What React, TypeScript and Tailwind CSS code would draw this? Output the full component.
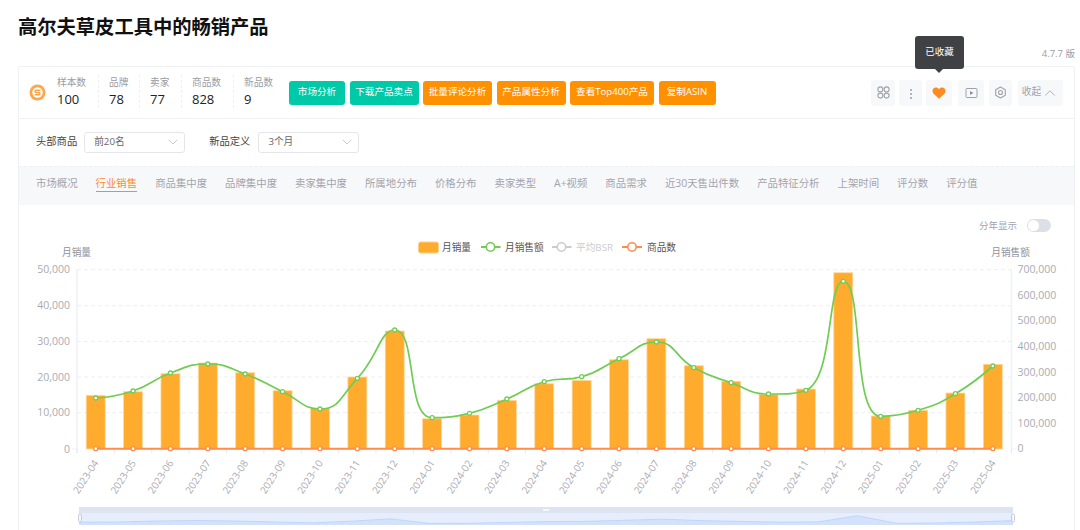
import React from "react";
import { ChevronDown, ChevronUp } from "lucide-react";

const FONT = '"Open Sans","Noto Sans CJK SC",sans-serif';
const months = ["2023-04","2023-05","2023-06","2023-07","2023-08","2023-09","2023-10","2023-11","2023-12","2024-01","2024-02","2024-03","2024-04","2024-05","2024-06","2024-07","2024-08","2024-09","2024-10","2024-11","2024-12","2025-01","2025-02","2025-03","2025-04"];
const barTop = [395.3,391.7,373.7,363,372.7,390.7,408.3,377,331,418.7,415,400.3,383.7,380.3,359.7,338.7,365.7,381.3,394.3,389,272.7,416,410.3,393,364.3];
const lineY = [398,391,373,364,374,391.7,409,378.3,330,417.7,413.3,399,381.7,376.7,358.7,342,367.7,382.7,394,390.3,281.3,416.3,410.3,393.7,366];

// Chart coordinates are page coordinates shifted by the svg's origin.
const OX = 19;
const OY = 238;
const L = 77;
const R = 1011.5;
const BASE = 449;
const band = (R - L) / 25;
const cx = (i: number) => L + band * (i + 0.5);

// Same control-point rule as the chart library's smoothed line: never overshoots a neighbour.
function smooth(px: number[], py: number[], s = 0.5) {
  const n = px.length;
  let d = `M${px[0]} ${py[0]}`;
  let c0x = px[0];
  let c0y = py[0];
  for (let i = 0; i < n - 1; i++) {
    const x = px[i + 1];
    const y = py[i + 1];
    let c1x = x;
    let c1y = y;
    let nextX0 = x;
    let nextY0 = y;
    if (i + 2 < n) {
      const pvx = px[i];
      const pvy = py[i];
      const nx = px[i + 2];
      const ny = py[i + 2];
      const vx = nx - pvx;
      const vy = ny - pvy;
      const lp = Math.hypot(x - pvx, y - pvy);
      const ln = Math.hypot(nx - x, ny - y);
      const r = ln / (ln + lp);
      let ncx = x + vx * s * r;
      let ncy = y + vy * s * r;
      ncx = Math.max(Math.min(ncx, Math.max(nx, x)), Math.min(nx, x));
      ncy = Math.max(Math.min(ncy, Math.max(ny, y)), Math.min(ny, y));
      let wx = ncx - x;
      let wy = ncy - y;
      c1x = x - (wx * lp) / ln;
      c1y = y - (wy * lp) / ln;
      c1x = Math.max(Math.min(c1x, Math.max(pvx, x)), Math.min(pvx, x));
      c1y = Math.max(Math.min(c1y, Math.max(pvy, y)), Math.min(pvy, y));
      wx = x - c1x;
      wy = y - c1y;
      nextX0 = x + (wx * ln) / lp;
      nextY0 = y + (wy * ln) / lp;
    }
    d += `C${c0x} ${c0y} ${c1x} ${c1y} ${x} ${y}`;
    c0x = nextX0;
    c0y = nextY0;
  }
  return d;
}

const xs = months.map((_, i) => cx(i));
const linePath = smooth(xs, lineY);

const stats = [
  ["样本数", "100", "w-[42px]"],
  ["品牌", "78", "w-[41px]"],
  ["卖家", "77", "w-[42px]"],
  ["商品数", "828", "w-[52px]"],
  ["新品数", "9", "w-[55px]"],
];
const buttons: [string, string, string][] = [
  ["市场分析", "bg-[#00c9a7]", "w-[56px]"],
  ["下载产品卖点", "bg-[#00c9a7]", "w-[69px]"],
  ["批量评论分析", "bg-[#ff9000]", "w-[69px]"],
  ["产品属性分析", "bg-[#ff9000]", "w-[69px]"],
  ["查看Top400产品", "bg-[#ff9000]", "w-[84px]"],
  ["复制ASIN", "bg-[#ff9000]", "w-[57px]"],
];
const tabs = ["市场概况","行业销售","商品集中度","品牌集中度","卖家集中度","所属地分布","价格分布","卖家类型","A+视频","商品需求","近30天售出件数","产品特征分析","上架时间","评分数","评分值"];

function Chart() {
  const gridYs = [269.7, 305.7, 341.4, 377, 412.7, 449];
  const leftLabels = ["50,000", "40,000", "30,000", "20,000", "10,000", "0"];
  const rightLabels = ["700,000", "600,000", "500,000", "400,000", "300,000", "200,000", "100,000", "0"];
  const axisText = "#a9abb3";
  const sx = (v: number) => 79 + (v / 24) * 934;
  const miniPts = barTop.map((t, i) => [sx(i), 525 - ((449 - t) / 180) * 9.5]);
  const mini = "M" + miniPts.map((p) => `${p[0]} ${p[1]}`).join("L");
  return (
    <svg width={1056} height={292} viewBox={`${OX} ${OY} 1056 292`} className="block" fontFamily={FONT}>
      {/* legend */}
      <rect x={418.5} y={242} width={20} height={11} rx={2} fill="#ffac2e" stroke="#ffd08a" strokeWidth={1} />
      <text x={442} y={251} fontSize={9.7} fill="#555">月销量</text>
      <line x1={481} x2={500.5} y1={247} y2={247} stroke="#71cc54" strokeWidth={2} />
      <circle cx={490.5} cy={247} r={4.2} fill="#fff" stroke="#71cc54" strokeWidth={1.6} />
      <text x={505} y={251} fontSize={9.7} fill="#555">月销售额</text>
      <line x1={552} x2={571.5} y1={247} y2={247} stroke="#ccc" strokeWidth={2} />
      <circle cx={561.5} cy={247} r={4.2} fill="#fff" stroke="#ccc" strokeWidth={1.6} />
      <text x={576} y={251} fontSize={9.7} fill="#ccc">平均BSR</text>
      <line x1={622} x2={642} y1={247} y2={247} stroke="#ff8c4b" strokeWidth={2} />
      <circle cx={632} cy={247} r={4.2} fill="#fff" stroke="#ff8c4b" strokeWidth={1.6} />
      <text x={647} y={251} fontSize={9.7} fill="#555">商品数</text>

      <text x={62} y={256} fontSize={9.7} fill="#8f9199">月销量</text>
      <text x={1030} y={256} fontSize={9.7} fill="#8f9199" textAnchor="end">月销售额</text>

      {/* grid */}
      {gridYs.slice(0, 5).map((y) => (
        <line key={y} x1={L} x2={R} y1={y} y2={y} stroke="#eceef2" strokeDasharray="4 3" />
      ))}
      <line x1={L} x2={L} y1={269} y2={453} stroke="#eff1f5" strokeWidth={1.5} />
      <line x1={R} x2={R} y1={269} y2={453} stroke="#eff1f5" strokeWidth={1.5} />
      <line x1={72} x2={L} y1={449} y2={449} stroke="#eff1f5" />
      <line x1={R} x2={1016} y1={449} y2={449} stroke="#eff1f5" />
      {gridYs.map((y, i) => (
        <text key={i} x={70} y={y + 3.5} fontSize={10.5} fill={axisText} textAnchor="end">{leftLabels[i]}</text>
      ))}
      {rightLabels.map((t, i) => (
        <text key={t} x={1017.5} y={269.7 + i * 25.6 + 3.5} fontSize={10.5} fill={axisText}>{t}</text>
      ))}

      {/* x ticks and labels */}
      {Array.from({ length: 26 }).map((_, i) => (
        <line key={i} x1={L + band * i} x2={L + band * i} y1={449} y2={453} stroke="#e6e8ee" />
      ))}
      {months.map((m, i) => (
        <text key={m} x={cx(i) + 3.3} y={463} fontSize={10} fill={axisText} textAnchor="end" transform={`rotate(-57 ${cx(i) + 3.3} 463)`}>{m}</text>
      ))}

      {/* bars */}
      {barTop.map((t, i) => (
        <rect key={i} x={cx(i) - 9.5} y={t} width={19} height={BASE - t} fill="#ffac2e" stroke="#ffd9a0" strokeWidth={0.8} />
      ))}

      {/* lines */}
      <line x1={cx(0)} x2={cx(24)} y1={448.7} y2={448.7} stroke="#ff8c4b" strokeWidth={2} />
      <path d={linePath} fill="none" stroke="#71cc54" strokeWidth={1.7} />
      {xs.map((x, i) => (
        <circle key={i} cx={x} cy={lineY[i]} r={2} fill="#fff" stroke="#71cc54" strokeWidth={1.3} />
      ))}
      {xs.map((x, i) => (
        <circle key={i} cx={x} cy={448.7} r={2} fill="#fff" stroke="#ff8c4b" strokeWidth={1.3} />
      ))}

      {/* data zoom */}
      <rect x={79} y={507} width={934} height={18} fill="#e6eefd" />
      <rect x={79} y={507} width={934} height={6} fill="#dde3f1" />
      <path d={`${mini}L1013 525L79 525Z`} fill="#d3e1fb" />
      <path d={mini} fill="none" stroke="#bcd0f5" strokeWidth={0.8} />
      <rect x={543} y={509} width={6} height={2} fill="#f5f7fb" />
      <rect x={78.5} y={514} width={3} height={8} rx={1.5} fill="#f4f7fe" stroke="#b7c2da" strokeWidth={0.8} />
      <rect x={1011.5} y={514} width={3} height={8} rx={1.5} fill="#f4f7fe" stroke="#b7c2da" strokeWidth={0.8} />
    </svg>
  );
}

function Logo() {
  return (
    <svg width={17} height={17} viewBox="0 0 17 17" fill="none">
      <circle cx={8.5} cy={8.5} r={8} fill="#ffa54a" />
      <circle cx={8.5} cy={8.5} r={5.2} fill="#fff" />
      <path d="M11.4 6.2H7C5.8 6.2 5.8 8.5 7 8.5H10C11.2 8.5 11.2 10.8 10 10.8H5.6" stroke="#ffa54a" strokeWidth={1.6} />
    </svg>
  );
}

export default function App() {
  return (
    <div className="h-[530px] w-[1080px] overflow-hidden bg-white" style={{ fontFamily: FONT }}>
      <div className="pl-[18px] pr-[5px]">
        <div className="flex items-start justify-between">
          <h1 className="mt-[12px] text-[19.3px] leading-[30px] font-bold text-[#111]">高尔夫草皮工具中的畅销产品</h1>
          <span className="mt-[47px] text-[9.5px] leading-[14px] text-[#9a9ca3] whitespace-nowrap">4.7.7 版</span>
        </div>

        <div className="relative mt-[5px] h-[480px] rounded-[3px] border border-[#eef0f3] bg-white">
          {/* tooltip */}
          <div className="absolute left-[896px] top-[-31px] z-10 flex h-[33px] w-[49px] items-center justify-center rounded-[3px] bg-[#3f4144] text-[9.5px] text-white">
            已收藏
            <span className="absolute bottom-[-4px] left-[20px] h-0 w-0 border-x-[4px] border-t-[4px] border-x-transparent border-t-[#3f4144]" />
          </div>

          {/* summary row */}
          <div className="flex h-[52px] items-center border-b border-[#eef0f3] pl-[10px] pr-[11px]">
            <Logo />
            <div className="mb-[2px] ml-[11px] flex">
              {stats.map(([k, v, w], i) => (
                <div key={k} className={`${w} ${i === 0 ? "" : "pl-[10px]"}`}>
                  <div className={`${i < 4 ? "border-r border-dashed border-[#eef0f3]" : ""} h-[33px]`}>
                    <div className="text-[9.7px] leading-[15px] text-[#9a9ca3]">{k}</div>
                    <div className="text-[13px] leading-[18px] font-medium text-[#222]">{v}</div>
                  </div>
                </div>
              ))}
            </div>
            <div className="flex gap-[4.5px]">
              {buttons.map(([t, bg, w]) => (
                <div key={t} className={`${bg} ${w} flex h-[24px] items-center justify-center whitespace-nowrap rounded-[3px] text-[9.6px] text-white`}>{t}</div>
              ))}
            </div>
            <div className="ml-auto flex items-center text-[#a8aab2]">
              <div className="flex h-[26px] w-[24px] items-center justify-center rounded-[3px] bg-[#f7f8fa]">
                <svg width={13} height={13} viewBox="0 0 13 13" fill="none" stroke="#a0a2aa" strokeWidth={1.1}>
                  <circle cx={3.4} cy={3.4} r={2.5} />
                  <circle cx={9.6} cy={3.4} r={2.5} />
                  <circle cx={3.4} cy={9.6} r={2.5} />
                  <circle cx={9.6} cy={9.6} r={2.5} />
                </svg>
              </div>
              <div className="ml-[4px] flex h-[26px] w-[23px] flex-col items-center justify-center gap-[2px] rounded-[3px] bg-[#f7f8fa] pt-[3px]">
                <span className="h-[2px] w-[2px] rounded-full bg-[#9a9ca3]" />
                <span className="h-[2px] w-[2px] rounded-full bg-[#9a9ca3]" />
                <span className="h-[2px] w-[2px] rounded-full bg-[#9a9ca3]" />
              </div>
              <div className="ml-[4px] flex h-[26px] w-[26px] items-center justify-center rounded-[3px] bg-[#f7f8fa]">
                <svg width={14} height={12} viewBox="0 0 24 21"><path d="M12 20.5 2.6 11.6C-1.6 7 1.4.8 6.6.8 8.8.8 10.8 2 12 4 13.2 2 15.2.8 17.4.8c5.2 0 8.2 6.2 4 10.800z" fill="#ff8a1f" /></svg>
              </div>
              <div className="ml-[6px] flex h-[26px] w-[26px] items-center justify-center rounded-[3px] bg-[#f7f8fa]">
                <svg width={13} height={12} viewBox="0 0 13 12" fill="none"><rect x={1} y={1.5} width={11} height={9} rx={1} stroke="#a0a2aa" strokeWidth={1} /><path d="M5 4 8.5 6 5 8z" fill="#8f9199" /></svg>
              </div>
              <div className="ml-[5px] flex h-[26px] w-[23px] items-center justify-center rounded-[3px] bg-[#f7f8fa]">
                <svg width={13} height={13} viewBox="0 0 13 13" fill="none" stroke="#a0a2aa" strokeWidth={1.1}><path d="M6.5 1 11.3 3.75v5.5L6.5 12 1.700 9.250v-5.500z" strokeLinejoin="round" /><circle cx={6.5} cy={6.5} r={2} /></svg>
              </div>
              <div className="ml-[6px] flex h-[26px] w-[45px] items-center justify-center rounded-[3px] bg-[#f7f8fa] text-[9.7px] text-[#a0a2aa]">
                收起<ChevronUp size={18} strokeWidth={1.1} />
              </div>
            </div>
          </div>

          {/* filter row */}
          <div className="flex h-[47px] items-center pb-[1px] pl-[17px] text-[10.3px] text-[#444]">
            <span>头部商品</span>
            <div className="ml-[7px] flex h-[21px] w-[101px] items-center justify-between rounded-[3px] border border-[#e4e6eb] pl-[9px] pr-[3px] text-[9.7px] text-[#666]">
              前20名<ChevronDown size={16} strokeWidth={0.9} className="text-[#aaa]" />
            </div>
            <span className="ml-[24px]">新品定义</span>
            <div className="ml-[8px] flex h-[21px] w-[101px] items-center justify-between rounded-[3px] border border-[#e4e6eb] pl-[9px] pr-[3px] text-[9.7px] text-[#666]">
              3个月<ChevronDown size={16} strokeWidth={0.9} className="text-[#aaa]" />
            </div>
          </div>

          {/* tabs */}
          <div className="flex h-[39px] items-center gap-[18px] border-t border-dashed border-[#eef0f3] bg-[#f7f8fa] pb-[5px] pl-[17px] text-[10.4px] text-[#a3a5ad]">
            {tabs.map((t, i) => (
              <span key={t} className={i === 1 ? "relative whitespace-nowrap text-[#ff8a1f] after:absolute after:inset-x-0 after:bottom-[-1px] after:h-[1px] after:bg-[#ff8a1f]" : "whitespace-nowrap"}>{t}</span>
            ))}
          </div>

          {/* chart body */}
          <div className="flex h-[33px] items-start justify-end gap-[10px] pt-[13px] pr-[23px]">
            <span className="text-[9.5px] leading-[15px] text-[#a3a5ad]">分年显示</span>
            <span className="relative mt-[1px] h-[13px] w-[24px] rounded-full bg-[#dcdfe6]">
              <span className="absolute left-[1px] top-[1px] h-[11px] w-[11px] rounded-full bg-white" />
            </span>
          </div>
          <Chart />
        </div>
      </div>
    </div>
  );
}
